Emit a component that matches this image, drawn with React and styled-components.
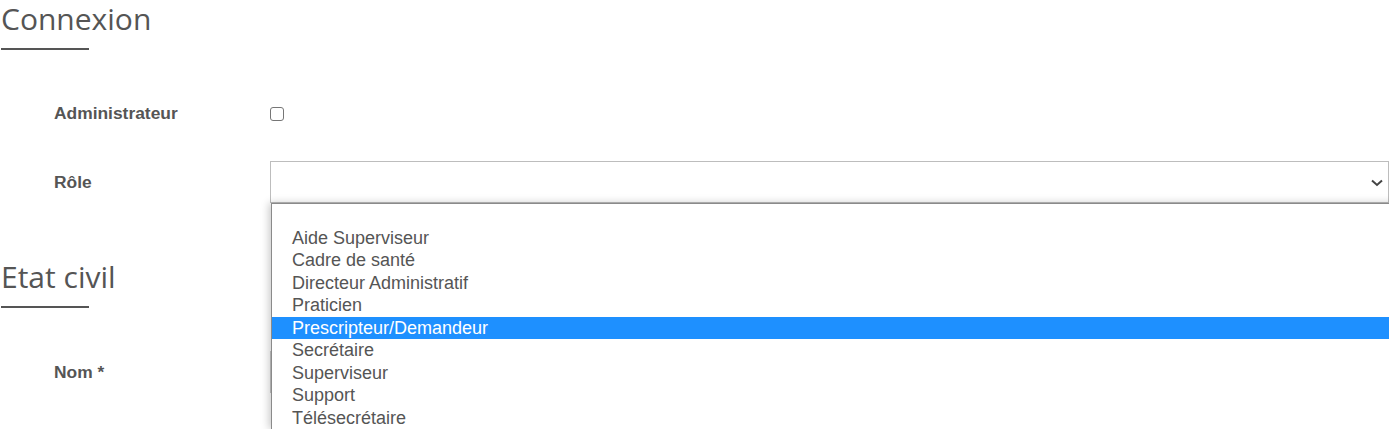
import React from "react";
import styled, { createGlobalStyle } from "styled-components";

const Global = createGlobalStyle`
  html, body { margin: 0; padding: 0; background: #fff; }
  body { font-family: "Liberation Sans", Arial, sans-serif; color: #555; overflow: hidden; }
`;

const Page = styled.div`
  width: 1389px;
  height: 429px;
  overflow: hidden;
  position: relative;
`;

const Section = styled.section`
  display: flex;
  flex-direction: column;
  margin-bottom: ${(p) => p.$after || 0}px;
`;

const Heading = styled.h2`
  margin: 0;
  font-family: "Open Sans", sans-serif;
  font-weight: 400;
  font-size: 30px;
  line-height: 38px;
  color: #555;
  padding-left: 1px;
`;

const Rule = styled.div`
  width: 88px;
  height: 2px;
  margin: 10px 0 0 1px;
  background: #555;
`;

const Rows = styled.div`
  display: flex;
  flex-direction: column;
  gap: 27px;
  margin-top: ${(p) => p.$top || 42}px;
`;

const Row = styled.div`
  display: grid;
  grid-template-columns: 270px 1fr;
  align-items: center;
  height: 42px;
  position: relative;
`;

const Label = styled.label`
  padding-left: 54px;
  font-weight: 700;
  font-size: 17.4px;
  color: #555;
`;

const Checkbox = styled.span`
  display: block;
  width: 12px;
  height: 12px;
  border: 1.3px solid #767676;
  border-radius: 3px;
  margin-top: 1px;
  background: #fff;
`;

const SelectBox = styled.div`
  height: 42px;
  box-sizing: border-box;
  border: 1px solid #bdbdbd;
  background: #fff;
  display: flex;
  align-items: center;
  justify-content: flex-end;
  padding-right: 5px;
`;

const Input = styled.div`
  height: 42px;
  box-sizing: border-box;
  border: 1px solid #c8c8c8;
  background: #fff;
`;

const Dropdown = styled.ul`
  position: absolute;
  left: 271px;
  top: 42px;
  width: 1130px;
  margin: 0;
  padding: 0;
  list-style: none;
  background: #fff;
  border-top: 1px solid #8a8a8a;
  border-left: 1px solid #8a8a8a;
  box-shadow: -2px 0 8px rgba(0, 0, 0, 0.22);
  z-index: 10;
`;

const Option = styled.li`
  height: 22.5px;
  line-height: 22.5px;
  padding-left: 20px;
  font-size: 18px;
  font-family: "Liberation Sans", Arial, sans-serif;
  white-space: nowrap;
  color: ${(p) => (p.$selected ? "#fff" : "#555")};
  background: ${(p) => (p.$selected ? "#1e90ff" : "transparent")};
`;

const options = [
  "",
  "Aide Superviseur",
  "Cadre de santé",
  "Directeur Administratif",
  "Praticien",
  "Prescripteur/Demandeur",
  "Secrétaire",
  "Superviseur",
  "Support",
  "Télésecrétaire",
];

const Chevron = () => (
  <svg width="12" height="8" viewBox="0 0 12 8" style={{ marginTop: 1 }}>
    <polyline points="1,1.5 6,6 11,1.5" fill="none" stroke="#444" strokeWidth="2" />
  </svg>
);

export default function App() {
  return (
    <Page>
      <Global />
      <Section $after={55}>
        <Heading>Connexion</Heading>
        <Rule />
        <Rows>
          <Row>
            <Label>Administrateur</Label>
            <Checkbox />
          </Row>
          <Row>
            <Label>Rôle</Label>
            <SelectBox>
              <Chevron />
            </SelectBox>
            <Dropdown>
              {options.map((o, i) => (
                <Option key={i} $selected={o === "Prescripteur/Demandeur"}>
                  {o}
                </Option>
              ))}
            </Dropdown>
          </Row>
        </Rows>
      </Section>
      <Section>
        <Heading>Etat civil</Heading>
        <Rule />
        <Rows $top={43}>
          <Row>
            <Label>Nom *</Label>
            <Input />
          </Row>
        </Rows>
      </Section>
    </Page>
  );
}
